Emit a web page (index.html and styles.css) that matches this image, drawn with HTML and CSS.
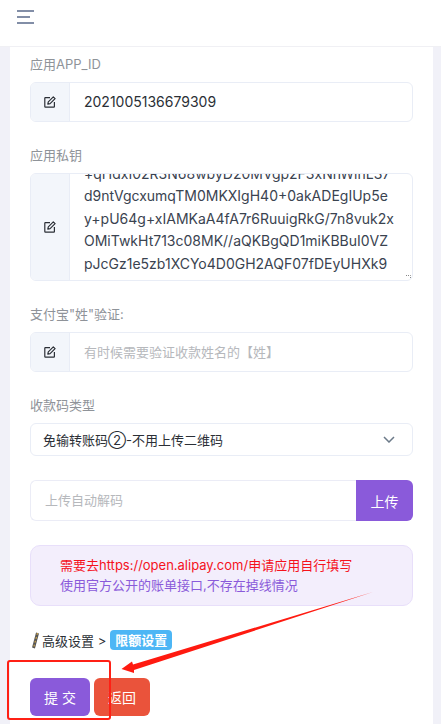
FILE: index.html
```html
<!DOCTYPE html>
<html lang="zh">
<head>
<meta charset="utf-8">
<title>支付宝设置</title>
<link rel="stylesheet" href="styles.css">
</head>
<body>
<svg width="0" height="0" class="defs"><defs>
<symbol id="edit" viewBox="0 0 12 12"><path d="M6 1.6H1.4A.6.6 0 0 0 .8 2.2v8.4a.6.6 0 0 0 .6.6h8.4a.6.6 0 0 0 .6-.6V6" fill="none" stroke="currentColor" stroke-width="1.2"/><path d="M9.3.9l1.8 1.8-5 5-2.3.5.5-2.3z" fill="none" stroke="currentColor" stroke-width="1.2" stroke-linejoin="round"/></symbol>
</defs></svg>
<header class="topbar">
  <svg class="menu" width="17" height="14" viewBox="0 0 17 14"><path d="M0 1h17M0 7h13M0 13h17" stroke="#5a6a8a" stroke-width="1.6"/></svg>
</header>
<main class="card">
  <div class="field">
    <label class="label">应用APP_ID</label>
    <div class="group">
      <span class="addon"><svg class="icon"><use href="#edit"/></svg></span>
      <span class="value">2021005136679309</span>
    </div>
  </div>
  <div class="field">
    <label class="label">应用私钥</label>
    <div class="group area">
      <span class="addon"><svg class="icon"><use href="#edit"/></svg></span>
      <div class="textarea">
        <div>+qHdxI02R3N68wbyD20MVgp2F3xNhWlnL37</div>
        <div>d9ntVgcxumqTM0MKXIgH40+0akADEgIUp5e</div>
        <div>y+pU64g+xIAMKaA4fA7r6RuuigRkG/7n8vuk2x</div>
        <div>OMiTwkHt713c08MK//aQKBgQD1miKBBuI0VZ</div>
        <div>pJcGz1e5zb1XCYo4D0GH2AQF07fDEyUHXk9</div>
        <svg class="grip" width="5" height="5" viewBox="0 0 5 5"><path d="M0 .5h4.5V5" fill="none" stroke="#888" stroke-width="1" stroke-dasharray="1 1"/></svg>
      </div>
    </div>
  </div>
  <div class="field">
    <label class="label">支付宝"姓"验证:</label>
    <div class="group">
      <span class="addon"><svg class="icon"><use href="#edit"/></svg></span>
      <span class="placeholder value-ph">有时候需要验证收款姓名的【姓】</span>
    </div>
  </div>
  <div class="field">
    <label class="label">收款码类型</label>
    <div class="select">
      <span>免输转账码②-不用上传二维码</span>
      <svg width="12" height="7" viewBox="0 0 12 7"><path d="M1 1l5 5 5-5" fill="none" stroke="#6c7a89" stroke-width="1.5"/></svg>
    </div>
  </div>
  <div class="upload">
    <span class="placeholder upload-ph">上传自动解码</span>
    <span class="upload-btn">上传</span>
  </div>
  <div class="notice">
    <div class="red">需要去https://open.alipay.com/申请应用自行填写</div>
    <div>使用官方公开的账单接口,不存在掉线情况</div>
  </div>
  <div class="advanced">
    <svg width="7" height="17" viewBox="0 0 7 17"><path d="M5.5 1L1.5 16" stroke="#555" stroke-width="3"/><path d="M5.5 1L1.5 16" stroke="#c9a24a" stroke-width="1.2" stroke-dasharray="2 2"/></svg>
    <span>高级设置 &gt;</span>
    <span class="badge">限额设置</span>
  </div>
  <div class="actions">
    <span class="btn submit">提 交</span>
    <span class="btn back">返回</span>
  </div>
</main>
<svg class="annotation" width="441" height="724" viewBox="0 0 441 724">
  <polygon points="373,592 134,670 134,673 121.5,669 132,661.5 133,664.5" fill="#ff1a10"/>
  <rect x="8" y="661" width="102" height="58" rx="2" fill="none" stroke="#ff2015" stroke-width="2"/>
</svg>
</body>
</html>
```
FILE: styles.css
```css
* { box-sizing: border-box; }
html, body { margin: 0; height: 724px; overflow: hidden; }
body {
  position: relative;
  background: #f1f1f8;
  font-family: Inter, "Noto Sans CJK SC", sans-serif;
  font-size: 13px;
  color: #2b2f36;
}
.defs { position: absolute; }
.topbar {
  height: 47px;
  background: #fff;
  border-bottom: 1px solid #f0f0f4;
  padding: 10px 17px 0;
}
.menu { display: block; }
.card {
  width: 423px;
  height: 677px;
  margin-left: 10px;
  background: #fff;
  padding: 8px 20px 0;
}
.field { margin-bottom: 24px; }
.label {
  display: block;
  height: 19px;
  line-height: 19px;
  margin-bottom: 8px;
  color: #8f9399;
}
.group {
  display: flex;
  height: 40px;
  border: 1px solid #e9edf6;
  border-radius: 6px;
  overflow: hidden;
  align-items: stretch;
}
.area { height: 108px; position: relative; }
.addon {
  flex: none;
  width: 39px;
  background: #f3f6fb;
  border-right: 1px solid #e9edf6;
  display: flex;
  align-items: center;
  justify-content: center;
  color: #2b2f36;
}
.icon { width: 12px; height: 12px; }
.value {
  padding-left: 14px;
  line-height: 38px;
  font-size: 14px;
}
.textarea {
  flex: 1;
  display: flex;
  flex-direction: column;
  justify-content: flex-end;
  overflow: hidden;
  padding: 0 0 5px 14px;
  font-size: 14px;
  line-height: 22.4px;
  white-space: nowrap;
  color: #3a4350;
}
.grip { position: absolute; right: 1px; bottom: 0; }
.placeholder { color: #b6b8bc; }
.value-ph { padding-left: 14px; line-height: 38px; }
.select {
  height: 33px;
  border: 1px solid #e9edf6;
  border-radius: 6px;
  padding: 0 17px 0 12px;
  display: flex;
  align-items: center;
  justify-content: space-between;
  margin-top: 1px;
  color: #2b2f36;
}
.upload {
  display: flex;
  height: 41px;
  align-items: stretch;
}
.upload-ph {
  flex: 1;
  padding-left: 14px;
  line-height: 39px;
  border: 1px solid #ebecf6;
  border-right: 0;
  border-radius: 6px 0 0 6px;
}
.upload-btn {
  width: 57px;
  background: #8a5ada;
  color: #fff;
  border-radius: 0 6px 6px 0;
  display: flex;
  align-items: center;
  justify-content: center;
  font-size: 14px;
}
.notice {
  height: 61px;
  margin-top: 24px;
  padding: 9px 29px;
  background: #f3eefc;
  border: 1px solid #e8dffa;
  border-radius: 10px;
  line-height: 20px;
  color: #8a5ada;
}
.red { color: #f5121c; }
.advanced {
  display: flex;
  align-items: center;
  height: 20px;
  margin-top: 24px;
  gap: 3px;
  color: #2b2f36;
}
.advanced svg { margin-left: 2px; }
.badge {
  height: 20px;
  line-height: 20px;
  margin-left: 1px;
  padding: 0 5px;
  background: #4db6f5;
  color: #fff;
  border-radius: 4px;
  font-weight: 700;
}
.actions {
  display: flex;
  gap: 4px;
  margin-top: 28px;
}
.btn {
  height: 38px;
  display: flex;
  align-items: center;
  justify-content: center;
  border-radius: 6px;
  color: #fff;
  font-size: 14px;
}
.submit { width: 60px; background: #8a5ada; }
.back { width: 56px; background: #ea533b; }
.annotation { position: absolute; left: 0; top: 0; pointer-events: none; }
```
